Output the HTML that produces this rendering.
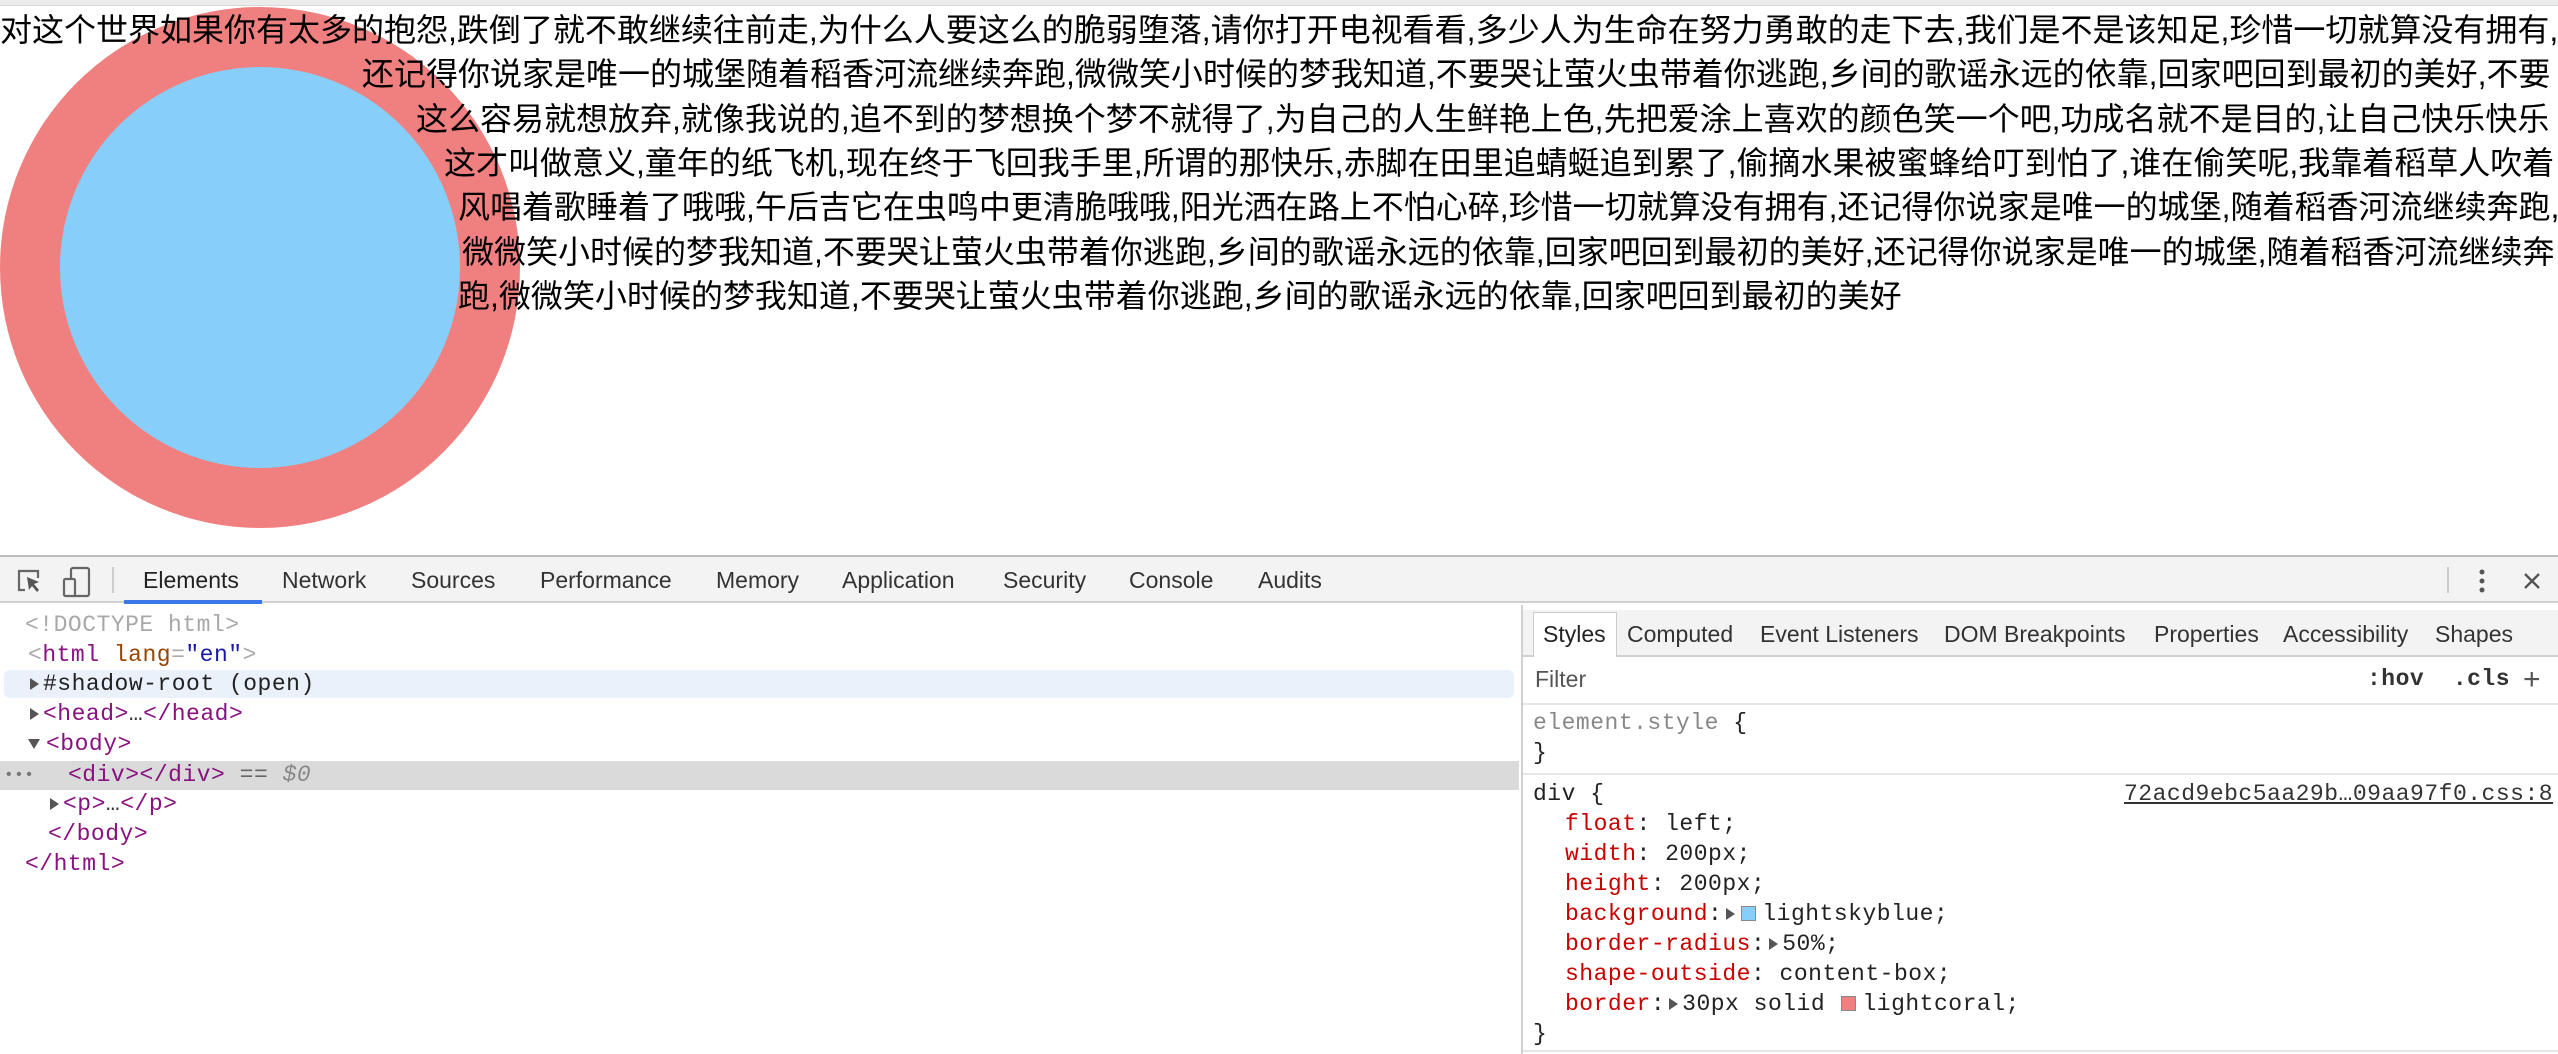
<!DOCTYPE html>
<html><head><meta charset="utf-8"><style>
*{box-sizing:border-box}
body{margin:0;width:2558px;height:1052px;overflow:hidden;background:#fff;position:relative;font-family:"Liberation Sans","Noto Sans CJK SC",sans-serif}
.topbar{position:absolute;left:0;top:0;width:2558px;height:6px;background:#ececec;border-bottom:1px solid #d8d8d8}
.circ{position:absolute;left:0;top:7px;width:520px;height:521px;border-radius:50%;background:#87cefa;border:60px solid #f08080}
.ln{position:absolute;height:45px;line-height:45px;font-size:32px;white-space:nowrap;text-align:justify;text-align-last:justify;color:#000;right:10px}
.ln.last{text-align-last:left}
.dt{position:absolute;left:0;top:555px;width:2558px;height:497px;border-top:2px solid #bdbdbd;background:#fff}
.tb{position:absolute;left:0;top:0;width:2558px;height:46px;background:#f3f3f3;border-bottom:2px solid #cfcfcf}
.tab{position:absolute;top:0;height:46px;line-height:46px;font-size:23px;color:#333}
.mono{font-family:"Liberation Mono","DejaVu Sans Mono",monospace;font-size:23px;letter-spacing:0.5px}
.row{position:absolute;height:30px;line-height:30px;white-space:nowrap}
.tg{color:#881280}.an{color:#994500}.av{color:#1a1aa6}.br{color:#a8a8a8}
.pn{color:#c80000}
.rp{position:absolute;left:1521px;top:48px;width:1037px;height:449px;border-left:2px solid #d0d0d0}
.stab{position:absolute;top:0;height:45px;line-height:45px;font-size:23px;color:#333}
.tri{display:inline-block;width:0;height:0;border-top:6px solid transparent;border-bottom:6px solid transparent;border-left:9px solid #555;vertical-align:middle;margin:0 4px}
.sw{display:inline-block;width:15px;height:15px;vertical-align:middle;margin:0 6px 0 2px;border:1px solid #888}
</style></head><body>
<div class="topbar"></div>
<div class="circ"></div>
<div class="ln" style="left:0;top:8px">对这个世界如果你有太多的抱怨,跌倒了就不敢继续往前走,为什么人要这么的脆弱堕落,请你打开电视看看,多少人为生命在努力勇敢的走下去,我们是不是该知足,珍惜一切就算没有拥有,</div>
<div class="ln" style="left:362px;top:52px">还记得你说家是唯一的城堡随着稻香河流继续奔跑,微微笑小时候的梦我知道,不要哭让萤火虫带着你逃跑,乡间的歌谣永远的依靠,回家吧回到最初的美好,不要</div>
<div class="ln" style="left:416px;top:97px">这么容易就想放弃,就像我说的,追不到的梦想换个梦不就得了,为自己的人生鲜艳上色,先把爱涂上喜欢的颜色笑一个吧,功成名就不是目的,让自己快乐快乐</div>
<div class="ln" style="left:444px;top:141px">这才叫做意义,童年的纸飞机,现在终于飞回我手里,所谓的那快乐,赤脚在田里追蜻蜓追到累了,偷摘水果被蜜蜂给叮到怕了,谁在偷笑呢,我靠着稻草人吹着</div>
<div class="ln" style="left:458px;top:185px">风唱着歌睡着了哦哦,午后吉它在虫鸣中更清脆哦哦,阳光洒在路上不怕心碎,珍惜一切就算没有拥有,还记得你说家是唯一的城堡,随着稻香河流继续奔跑,</div>
<div class="ln" style="left:462px;top:230px">微微笑小时候的梦我知道,不要哭让萤火虫带着你逃跑,乡间的歌谣永远的依靠,回家吧回到最初的美好,还记得你说家是唯一的城堡,随着稻香河流继续奔</div>
<div class="ln last" style="left:458px;top:274px;right:auto">跑,微微笑小时候的梦我知道,不要哭让萤火虫带着你逃跑,乡间的歌谣永远的依靠,回家吧回到最初的美好</div>

<div class="dt">
 <div class="tb">
  <svg style="position:absolute;left:16px;top:11px" width="28" height="26" viewBox="0 0 28 26"><path d="M9 22H3V3h19v7" fill="none" stroke="#666" stroke-width="2.2"/><path d="M11 9l12 5-5 2 5 6-2 2-5-6-3 4z" fill="#555"/></svg>
  <svg style="position:absolute;left:62px;top:9px" width="30" height="32" viewBox="0 0 30 32"><rect x="9" y="2" width="18" height="28" rx="2" fill="none" stroke="#666" stroke-width="2.2"/><rect x="2" y="13" width="11" height="17" rx="1.5" fill="#f3f3f3" stroke="#666" stroke-width="2.2"/></svg>
  <div style="position:absolute;left:112px;top:10px;width:2px;height:26px;background:#ccc"></div>
  <div class="tab" style="left:143px;color:#222">Elements</div>
  <div style="position:absolute;left:124px;top:43px;width:138px;height:4px;background:#3b78e7"></div>
  <div class="tab" style="left:282px">Network</div>
  <div class="tab" style="left:411px">Sources</div>
  <div class="tab" style="left:540px">Performance</div>
  <div class="tab" style="left:716px">Memory</div>
  <div class="tab" style="left:842px">Application</div>
  <div class="tab" style="left:1003px">Security</div>
  <div class="tab" style="left:1129px">Console</div>
  <div class="tab" style="left:1258px">Audits</div>
  <div style="position:absolute;left:2447px;top:10px;width:2px;height:26px;background:#ccc"></div>
  <svg style="position:absolute;left:2476px;top:10px" width="12" height="28" viewBox="0 0 12 28"><circle cx="6" cy="5" r="2.5" fill="#555"/><circle cx="6" cy="14" r="2.5" fill="#555"/><circle cx="6" cy="23" r="2.5" fill="#555"/></svg>
  <svg style="position:absolute;left:2522px;top:14px" width="20" height="20" viewBox="0 0 20 20"><path d="M3 3l14 14M17 3L3 17" stroke="#555" stroke-width="2.4"/></svg>
 </div>
 <div class="mono">
  <div class="row br" style="left:25px;top:53px">&lt;!DOCTYPE html&gt;</div>
  <div class="row" style="left:28px;top:83px"><span class="br">&lt;</span><span class="tg">html</span> <span class="an">lang</span><span class="br">=</span><span class="av">"en"</span><span class="br">&gt;</span></div>
  <div style="position:absolute;left:4px;top:113px;width:1510px;height:28px;background:#eaf1fb;border-radius:6px"></div>
  <div class="row" style="left:30px;top:112px;color:#222"><span class="tri" style="margin-left:0"></span>#shadow-root (open)</div>
  <div class="row" style="left:30px;top:142px"><span class="tri" style="margin-left:0"></span><span class="tg">&lt;head&gt;</span><span style="color:#333">…</span><span class="tg">&lt;/head&gt;</span></div>
  <div class="row" style="left:28px;top:172px"><span style="display:inline-block;width:0;height:0;border-left:6px solid transparent;border-right:6px solid transparent;border-top:10px solid #555;margin-right:6px;vertical-align:middle"></span><span class="tg">&lt;body&gt;</span></div>
  <div style="position:absolute;left:0;top:204px;width:1519px;height:29px;background:#dadada"></div>
  <div class="row" style="left:4px;top:203px;color:#777;font-size:16px">•••</div>
  <div class="row" style="left:68px;top:203px"><span class="tg">&lt;div&gt;&lt;/div&gt;</span> <span style="color:#666">==</span> <span style="color:#888;font-style:italic">$0</span></div>
  <div class="row" style="left:50px;top:232px"><span class="tri" style="margin-left:0"></span><span class="tg">&lt;p&gt;</span><span style="color:#333">…</span><span class="tg">&lt;/p&gt;</span></div>
  <div class="row tg" style="left:48px;top:262px">&lt;/body&gt;</div>
  <div class="row tg" style="left:25px;top:292px">&lt;/html&gt;</div>
 </div>
 <div class="rp">
  <div style="position:absolute;left:0;top:5px;width:1037px;height:47px;background:#f3f3f3;border-bottom:2px solid #d0d0d0"></div>
  <div style="position:absolute;left:10px;top:7px;width:84px;height:45px;background:#fff;border:1px solid #ccc;border-bottom:none"></div>
  <div class="stab" style="left:20px;top:7px;color:#222">Styles</div>
  <div class="stab" style="left:104px;top:7px">Computed</div>
  <div class="stab" style="left:237px;top:7px">Event Listeners</div>
  <div class="stab" style="left:421px;top:7px">DOM Breakpoints</div>
  <div class="stab" style="left:631px;top:7px">Properties</div>
  <div class="stab" style="left:760px;top:7px">Accessibility</div>
  <div class="stab" style="left:912px;top:7px">Shapes</div>
  <div class="stab" style="left:12px;top:52px;color:#555">Filter</div>
  <div class="mono" style="position:absolute;left:844px;top:59px;line-height:30px;font-weight:bold;color:#333">:hov&nbsp; .cls</div>
  <div style="position:absolute;left:1000px;top:52px;font-size:30px;line-height:45px;color:#555">+</div>
  <div style="position:absolute;left:0;top:98px;width:1037px;height:2px;background:#e6e6e6"></div>
  <div class="mono" style="color:#222">
   <div class="row" style="left:10px;top:103px"><span style="color:#888">element.style</span> {</div>
   <div class="row" style="left:10px;top:133px">}</div>
   <div style="position:absolute;left:0;top:168px;width:1037px;height:2px;background:#e6e6e6"></div>
   <div class="row" style="left:10px;top:174px">div {</div>
   <div class="row" style="left:601px;top:174px;text-decoration:underline;color:#333">72acd9ebc5aa29b…09aa97f0.css:8</div>
   <div class="row" style="left:42px;top:204px"><span class="pn">float</span>: left;</div>
   <div class="row" style="left:42px;top:234px"><span class="pn">width</span>: 200px;</div>
   <div class="row" style="left:42px;top:264px"><span class="pn">height</span>: 200px;</div>
   <div class="row" style="left:42px;top:294px"><span class="pn">background</span>:<span class="tri"></span><span class="sw" style="background:#87cefa"></span>lightskyblue;</div>
   <div class="row" style="left:42px;top:324px"><span class="pn">border-radius</span>:<span class="tri"></span>50%;</div>
   <div class="row" style="left:42px;top:354px"><span class="pn">shape-outside</span>: content-box;</div>
   <div class="row" style="left:42px;top:384px"><span class="pn">border</span>:<span class="tri"></span>30px solid <span class="sw" style="background:#f08080"></span>lightcoral;</div>
   <div class="row" style="left:10px;top:414px">}</div>
   <div style="position:absolute;left:0;top:445px;width:1037px;height:2px;background:#e6e6e6"></div>
  </div>
 </div>
</div>
</body></html>
